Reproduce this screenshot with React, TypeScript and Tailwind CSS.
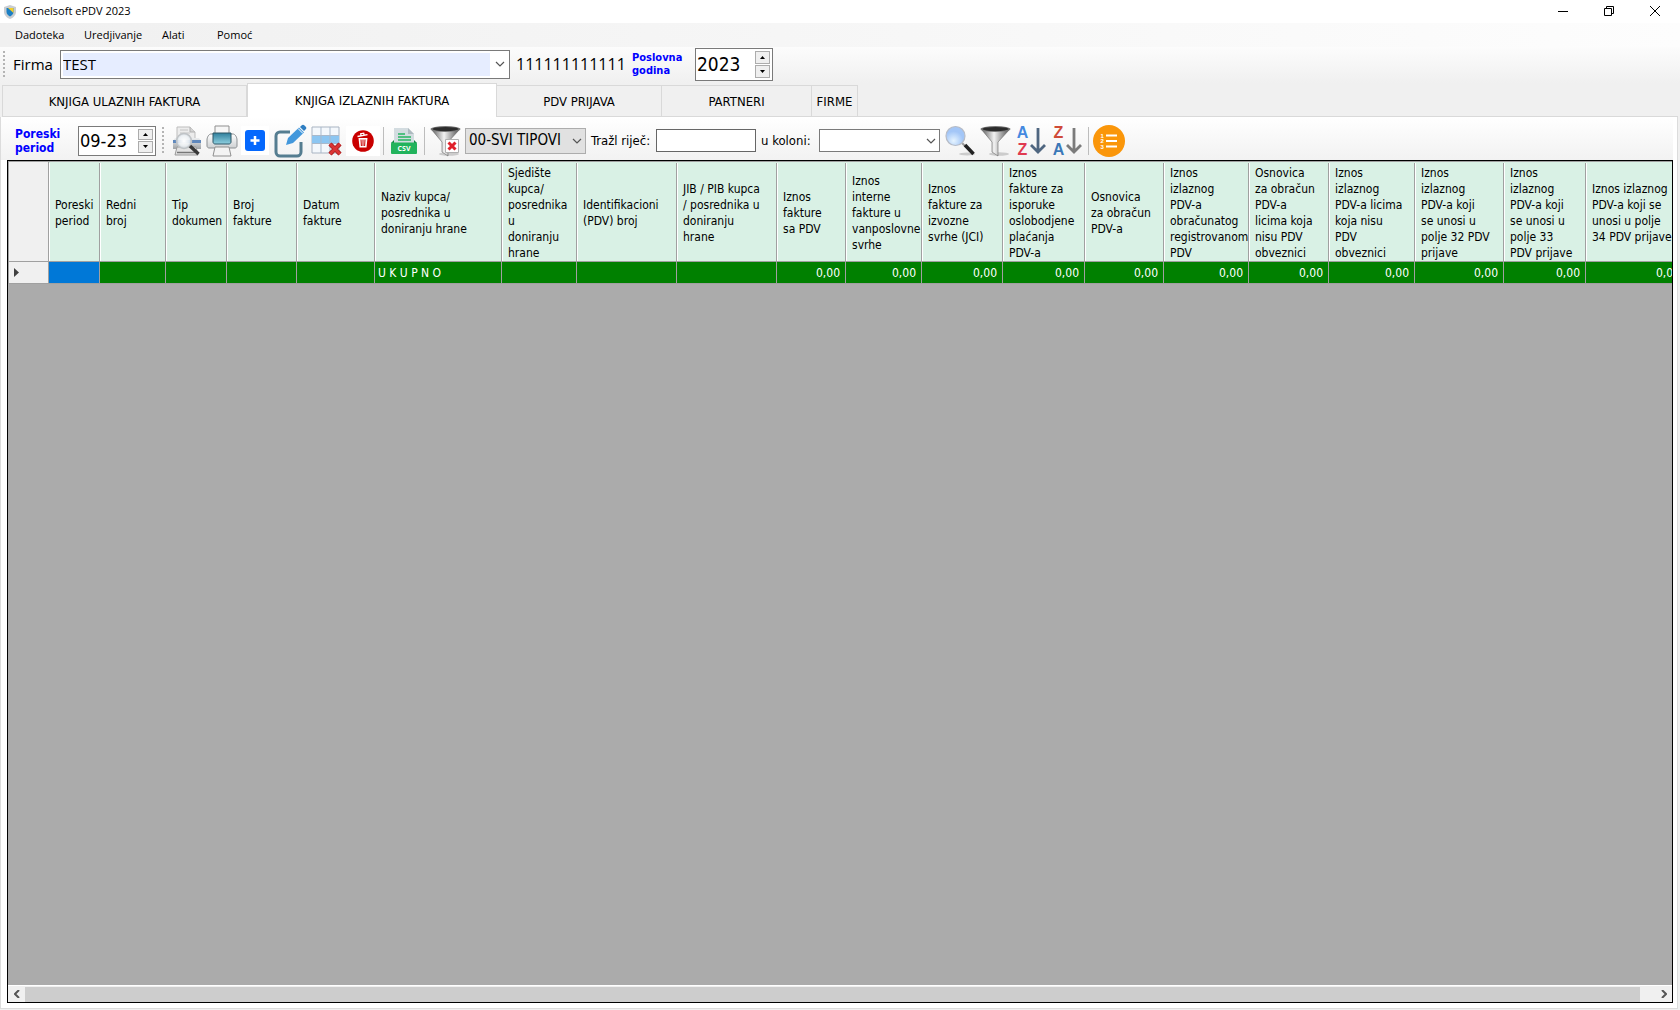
import { ReactNode } from "react";

interface Column {
  lines: string[];
  width: string;
  total: string;
  align: string;
}

const LEFT = "text-left";
const RIGHT = "text-right";

const columns: Column[] = [
  { lines: ["Poreski", "period"], width: "w-[51px]", total: "", align: LEFT },
  { lines: ["Redni", "broj"], width: "w-[66px]", total: "", align: LEFT },
  { lines: ["Tip", "dokumen"], width: "w-[61px]", total: "", align: LEFT },
  { lines: ["Broj", "fakture"], width: "w-[70px]", total: "", align: LEFT },
  { lines: ["Datum", "fakture"], width: "w-[78px]", total: "", align: LEFT },
  {
    lines: ["Naziv kupca/", "posrednika u", "doniranju hrane"],
    width: "w-[127px]",
    total: "U K U P N O",
    align: LEFT,
  },
  {
    lines: ["Sjedište", "kupca/", "posrednika", "u", "doniranju", "hrane"],
    width: "w-[75px]",
    total: "",
    align: LEFT,
  },
  { lines: ["Identifikacioni", "(PDV) broj"], width: "w-[100px]", total: "", align: LEFT },
  {
    lines: ["JIB / PIB kupca", "/ posrednika u", "doniranju", "hrane"],
    width: "w-[100px]",
    total: "",
    align: LEFT,
  },
  { lines: ["Iznos", "fakture", "sa PDV"], width: "w-[69px]", total: "0,00", align: RIGHT },
  {
    lines: ["Iznos", "interne", "fakture u", "vanposlovne", "svrhe"],
    width: "w-[76px]",
    total: "0,00",
    align: RIGHT,
  },
  {
    lines: ["Iznos", "fakture za", "izvozne", "svrhe (JCI)"],
    width: "w-[81px]",
    total: "0,00",
    align: RIGHT,
  },
  {
    lines: ["Iznos", "fakture za", "isporuke", "oslobodjene", "plaćanja", "PDV-a"],
    width: "w-[82px]",
    total: "0,00",
    align: RIGHT,
  },
  { lines: ["Osnovica", "za obračun", "PDV-a"], width: "w-[79px]", total: "0,00", align: RIGHT },
  {
    lines: ["Iznos", "izlaznog", "PDV-a", "obračunatog", "registrovanom", "PDV"],
    width: "w-[85px]",
    total: "0,00",
    align: RIGHT,
  },
  {
    lines: ["Osnovica", "za obračun", "PDV-a", "licima koja", "nisu PDV", "obveznici"],
    width: "w-[80px]",
    total: "0,00",
    align: RIGHT,
  },
  {
    lines: ["Iznos", "izlaznog", "PDV-a licima", "koja nisu", "PDV", "obveznici"],
    width: "w-[86px]",
    total: "0,00",
    align: RIGHT,
  },
  {
    lines: ["Iznos", "izlaznog", "PDV-a koji", "se unosi u", "polje 32 PDV", "prijave"],
    width: "w-[89px]",
    total: "0,00",
    align: RIGHT,
  },
  {
    lines: ["Iznos", "izlaznog", "PDV-a koji", "se unosi u", "polje 33", "PDV prijave"],
    width: "w-[82px]",
    total: "0,00",
    align: RIGHT,
  },
  {
    lines: ["Iznos izlaznog", "PDV-a koji se", "unosi u polje", "34 PDV prijave"],
    width: "w-[100px]",
    total: "0,00",
    align: RIGHT,
  },
];

const tabs = [
  { label: "KNJIGA ULAZNIH FAKTURA", width: "w-[245px]", active: false },
  { label: "KNJIGA IZLAZNIH FAKTURA", width: "w-[250px]", active: true },
  { label: "PDV PRIJAVA", width: "w-[165px]", active: false },
  { label: "PARTNERI", width: "w-[150px]", active: false },
  { label: "FIRME", width: "w-[46px]", active: false },
];

function Chevron() {
  return (
    <svg className="pointer-events-none absolute right-1 top-1/2 -mt-1 h-2 w-2.5" viewBox="0 0 10 8">
      <path d="M1 2l4 4 4-4" fill="none" stroke="#555" strokeWidth="1.2" />
    </svg>
  );
}

function Grip() {
  return (
    <svg className="h-[27px] w-[2px] shrink-0" viewBox="0 0 2 27">
      <path d="M1 0v27" stroke="#b4b4b4" strokeWidth="2" strokeDasharray="2 2" />
    </svg>
  );
}

function Separator() {
  return <div className="h-7 w-px shrink-0 bg-[#bdbdbd]" />;
}

interface SpinnerProps {
  id: string;
  value: string;
  box: string;
  text: string;
}

function Spinner({ id, value, box, text }: SpinnerProps) {
  return (
    <div className={`flex w-[78px] shrink-0 border border-[#7a7a7a] bg-white py-0.5 pl-px pr-0.5 ${box}`}>
      <input id={id} defaultValue={value} className={`min-w-0 flex-1 bg-transparent outline-none ${text}`} />
      <div className="flex w-[15px] flex-col gap-px">
        <button aria-label="Povećaj" className="flex flex-1 items-center justify-center border border-[#acacac] bg-[#efefef]">
          <svg className="h-[3px] w-[5px]" viewBox="0 0 5 3">
            <path d="M0 3l2.500-3L5 3z" />
          </svg>
        </button>
        <button aria-label="Smanji" className="flex flex-1 items-center justify-center border border-[#acacac] bg-[#efefef]">
          <svg className="h-[3px] w-[5px]" viewBox="0 0 5 3">
            <path d="M0 0l2.500 3L5 0z" />
          </svg>
        </button>
      </div>
    </div>
  );
}

function ToolButton({ label, className, children }: { label: string; className: string; children: ReactNode }) {
  return (
    <button aria-label={label} title={label} className={`shrink-0 ${className}`}>
      {children}
    </button>
  );
}

function PreviewIcon() {
  return (
    <svg viewBox="0 0 30 32" className="h-8 w-[30px]">
      <defs>
        <linearGradient id="pv" x1="0" y1="0" x2="0" y2="1">
          <stop offset="0" stopColor="#eceef0" />
          <stop offset="1" stopColor="#9fa3a6" />
        </linearGradient>
        <radialGradient id="lens">
          <stop offset="0" stopColor="#fff" />
          <stop offset="0.700" stopColor="#eef2f5" stopOpacity="0.9" />
          <stop offset="1" stopColor="#cfd8e0" stopOpacity="0.8" />
        </radialGradient>
      </defs>
      <path d="M5 2h13l5 5v8H5z" fill="#ececec" stroke="#bdbdbd" />
      <path d="M18 2v5h5" fill="#d4d4d4" stroke="#b0b0b0" />
      <path d="M8 5h8M8 8h10" stroke="#c4c4c4" />
      <path d="M3 13h24l2 3v8H1v-8z" fill="url(#pv)" />
      <path d="M1 15h28v3H1z" fill="#5f88bd" />
      <path d="M5 22h19l2 8H3z" fill="#e2e2e2" stroke="#999" />
      <path d="M5 27.500h18" stroke="#777" strokeWidth="1.500" />
      <circle cx="12" cy="16" r="7.500" fill="url(#lens)" stroke="#bfc3c6" strokeWidth="1.500" />
      <path d="M18 21l8.500 8" stroke="#383838" strokeWidth="3.500" />
    </svg>
  );
}

function PrinterIcon() {
  return (
    <svg viewBox="0 0 32 32" className="h-8 w-8">
      <defs>
        <linearGradient id="pr" x1="0" y1="0" x2="0" y2="1">
          <stop offset="0" stopColor="#fff" />
          <stop offset="1" stopColor="#cdd0d2" />
        </linearGradient>
        <linearGradient id="screen" x1="0" y1="0" x2="0" y2="1">
          <stop offset="0" stopColor="#2f7f9c" />
          <stop offset="1" stopColor="#8fd0e0" />
        </linearGradient>
      </defs>
      <path d="M9 1h14v10H9z" fill="#f6f6f6" stroke="#8f8f8f" />
      <path d="M5 9h22c2 0 4 3 4 6v6c0 1-1 2-2 2H3c-1 0-2-1-2-2v-6c0-3 2-6 4-6z" fill="url(#pr)" stroke="#8b8f92" />
      <path d="M7 8h18v9c0 1-1 2-2 2H9c-1 0-2-1-2-2z" fill="url(#screen)" stroke="#2d5666" />
      <path d="M9 22h14l2 9H7z" fill="#f3f3f3" stroke="#8f8f8f" />
    </svg>
  );
}

function EditIcon() {
  return (
    <svg viewBox="0 0 34 34" className="h-[34px] w-[34px]">
      <path d="M17 8H7a4 4 0 0 0-4 4v16a4 4 0 0 0 4 4h17a4 4 0 0 0 4-4V18" fill="none" stroke="#557d90" strokeWidth="3" />
      <path d="M13 21l2-7L26 3.500l5 5L20 19z" fill="#4398dc" />
      <path d="M27 3l1.500-1.500a2 2 0 0 1 3 0l1 1a2 2 0 0 1 0 3L31 7z" fill="#2f7ec2" />
      <path d="M25 4.500l5 5" stroke="#fff" strokeWidth="1" />
    </svg>
  );
}

function GridDeleteIcon() {
  return (
    <svg viewBox="0 0 31 31" className="h-[31px] w-[31px]">
      <path d="M1 2h27v26H1z" fill="#f4f8fc" stroke="#a9b4c2" />
      <path d="M1 10.500h27v8H1z" fill="#8cc6f2" />
      <path d="M1 10.500h27M1 18.500h27M10 2v26M19 2v26" stroke="#a9b9cb" />
      <path d="M19 19l10 10M29 19L19 29" stroke="#a41e1e" strokeWidth="4.500" />
      <path d="M19 19l10 10M29 19L19 29" stroke="#db3434" strokeWidth="2.800" />
    </svg>
  );
}

function TrashIcon() {
  return (
    <svg viewBox="0 0 22 22" className="h-[22px] w-[22px]">
      <circle cx="11" cy="11" r="10.800" fill="#c90000" />
      <path d="M6.500 8h9l-1 9.500h-7z" fill="#fff" />
      <path d="M5.500 6.500l10-1.800M9 5.200l-.3-1.500 3-.5.3 1.500" stroke="#fff" strokeWidth="1.300" fill="none" />
      <path d="M9 9.500l.4 6.500M11 9.500V16M13 9.500l-.4 6.500" stroke="#c90000" />
    </svg>
  );
}

function CsvIcon() {
  return (
    <svg viewBox="0 0 26 28" className="h-7 w-[26px]">
      <path d="M3 1h14l6 6v9H3z" fill="#d3dce0" />
      <path d="M17 1l6 6h-6z" fill="#aebac0" />
      <path d="M7 7h7M7 10h13M7 13h13" stroke="#27b561" strokeWidth="1.300" />
      <path d="M0 16l3-3v3zM26 16l-3-3v3z" fill="#118043" />
      <rect y="15.500" width="26" height="11.500" rx="1" fill="#22b35c" />
      <text x="13" y="24" textAnchor="middle" fontSize="7" fontWeight="700" fill="#fff" fontFamily="Open Sans, sans-serif">
        CSV
      </text>
    </svg>
  );
}

function FunnelIcon({ id, clear = false }: { id: string; clear?: boolean }) {
  return (
    <svg viewBox="0 0 31 32" className="h-8 w-[31px]">
      <defs>
        <linearGradient id={id}>
          <stop offset="0" stopColor="#555" />
          <stop offset="0.450" stopColor="#f2f2f2" />
          <stop offset="1" stopColor="#4a4a4a" />
        </linearGradient>
      </defs>
      <ellipse cx="19" cy="29" rx="10" ry="1.800" fill="#ccc" />
      <path d="M1 4l11 13v10l6 4V17L30 4z" fill={`url(#${id})`} stroke="#666" strokeWidth="0.600" />
      <ellipse cx="15.500" cy="4" rx="15" ry="3" fill="#777" />
      <ellipse cx="15.500" cy="4" rx="13" ry="2" fill="#2c2c2c" />
      {clear && (
        <>
          <path d="M15.500 14.500h13v13h-13z" fill="#fff" stroke="#b0b0b0" />
          <path d="M18.500 17.500l7 7M25.500 17.500l-7 7" stroke="#e0212b" strokeWidth="3" />
        </>
      )}
    </svg>
  );
}

function SearchIcon() {
  return (
    <svg viewBox="0 0 30 32" className="h-8 w-[30px]">
      <defs>
        <radialGradient id="glass" cx="0.400" cy="0.750">
          <stop offset="0" stopColor="#e6f4ff" />
          <stop offset="1" stopColor="#a3c6f7" />
        </radialGradient>
      </defs>
      <ellipse cx="22" cy="29" rx="8" ry="1.500" fill="#ccc" />
      <path d="M17 18l4 4" stroke="#999" strokeWidth="2" />
      <path d="M20 20l8.500 9" stroke="#222" strokeWidth="3.500" />
      <circle cx="10.500" cy="11" r="9.500" fill="url(#glass)" stroke="#b7bcc6" strokeWidth="1.200" />
    </svg>
  );
}

function SortIcon({ top, bottom, topColor, bottomColor, arrow }: Record<string, string>) {
  return (
    <svg
      viewBox="0 0 30 32"
      className="h-8 w-[30px] overflow-visible"
      fontFamily="Liberation Sans, sans-serif"
      fontWeight="700"
      fontSize="16"
    >
      <text x="6.500" y="13" textAnchor="middle" fill={topColor}>
        {top}
      </text>
      <text x="6.500" y="30" textAnchor="middle" fill={bottomColor}>
        {bottom}
      </text>
      <path d="M22 3v24M15 20l7 7 7-7" fill="none" stroke={arrow} strokeWidth="2.800" />
    </svg>
  );
}

function ListIcon() {
  return (
    <svg viewBox="0 0 32 32" className="h-8 w-8">
      <circle cx="16" cy="16" r="16" fill="#fa960a" />
      <path d="M13 10.500h11M13 16h11M13 21.500h11" stroke="#fff" strokeWidth="1.800" />
      <g fill="#fff" fontSize="6" fontWeight="700" fontFamily="Liberation Sans, sans-serif">
        <text x="7.500" y="12.500">1</text>
        <text x="7.500" y="18">2</text>
        <text x="7.500" y="23.500">3</text>
      </g>
    </svg>
  );
}

function TitleBar() {
  return (
    <header className="flex h-[23px] shrink-0 items-center bg-white pl-1 font-['Open_Sans',sans-serif] text-[11px]">
      <svg viewBox="0 0 12 14" className="mr-[7px] h-3.5 w-3">
        <path d="M6 0l6 2v5c0 3-3 6-6 7-3-1-6-4-6-7V2z" fill="#c9cdd1" />
        <path d="M2.500 3h7v4c0 2-2 4-3.500 4.500C4.500 11 2.500 9 2.500 7z" fill="#1b7fc4" />
        <path d="M4 3h5.500v5z" fill="#f4cf2a" />
      </svg>
      <h1 className="flex-1">Genelsoft ePDV 2023</h1>
      <div className="flex items-center gap-9 pb-0.5 pr-5">
        <button aria-label="Minimiziraj">
          <svg viewBox="0 0 10 10" className="h-2.5 w-2.5">
            <path d="M0 5.500h10" stroke="#000" />
          </svg>
        </button>
        <button aria-label="Vrati">
          <svg viewBox="0 0 10 10" className="h-2.5 w-2.5" fill="none" stroke="#000">
            <path d="M.5 2.500h7v7h-7zM2.500 2.500v-2h7v7h-2" />
          </svg>
        </button>
        <button aria-label="Zatvori">
          <svg viewBox="0 0 10 10" className="h-2.5 w-2.5">
            <path d="M0 0l10 10M10 0L0 10" stroke="#000" />
          </svg>
        </button>
      </div>
    </header>
  );
}

function CompanyBar() {
  return (
    <div className="flex h-9 shrink-0 items-center bg-gradient-to-b from-[#fcfcfc] to-[#f0f0f0] pb-0.5 pl-[3px]">
      <Grip />
      <label htmlFor="firma" className="ml-2 w-[47px] font-['Open_Sans',sans-serif] text-[15px]">
        Firma
      </label>
      <div className="relative h-[29px] w-[450px] border border-[#7a7a7a] bg-white p-0.5">
        <select
          id="firma"
          className="block h-full w-[427px] appearance-none bg-[#e6edff] font-['Open_Sans',sans-serif] text-[15px] leading-[22px] outline-none"
        >
          <option>TEST</option>
        </select>
        <Chevron />
      </div>
      <span className="ml-1.5 w-[116px] font-['Open_Sans',sans-serif] text-[16px]">111111111111</span>
      <label htmlFor="godina" className="w-[63px] text-[11px] font-bold leading-[13px] text-[#0000ff]">
        Poslovna
        <br />
        godina
      </label>
      <Spinner id="godina" value="2023" box="h-[33px]" text="text-[19px]" />
    </div>
  );
}

function RecordBar() {
  return (
    <div className="flex h-[43px] shrink-0 items-center bg-gradient-to-b from-white to-[#f2f2f2] pl-3.5 pt-1">
      <label htmlFor="period" className="w-[63px] text-[12px] font-bold leading-[14px] text-[#0000ff]">
        Poreski
        <br />
        period
      </label>
      <Spinner id="period" value="09-23" box="h-[30px]" text="text-[18px]" />
      <div className="ml-1.5 flex flex-1 items-center">
        <Grip />
        <ToolButton label="Pregled štampe" className="ml-2">
          <PreviewIcon />
        </ToolButton>
        <ToolButton label="Štampa" className="ml-1">
          <PrinterIcon />
        </ToolButton>
        <ToolButton label="Dodaj" className="ml-[3px] bg-white p-1">
          <svg viewBox="0 0 20 21" className="h-[21px] w-5">
            <rect width="20" height="21" rx="3" fill="#0568fd" />
            <path d="M10 6v9M5.500 10.500h9" stroke="#fff" strokeWidth="2.500" />
          </svg>
        </ToolButton>
        <ToolButton label="Izmijeni" className="ml-1">
          <EditIcon />
        </ToolButton>
        <ToolButton label="Obriši red" className="ml-1">
          <GridDeleteIcon />
        </ToolButton>
        <ToolButton label="Obriši sve" className="ml-1 bg-white px-1.5 py-1">
          <TrashIcon />
        </ToolButton>
        <div className="ml-[3px]">
          <Separator />
        </div>
        <ToolButton label="CSV izvoz" className="mx-[7px]">
          <CsvIcon />
        </ToolButton>
        <Separator />
        <ToolButton label="Ukloni filter" className="ml-[5px]">
          <FunnelIcon id="funnelClear" clear />
        </ToolButton>
        <div className="relative ml-1 h-[26px] w-[121px] shrink-0">
          <select
            aria-label="Tip dokumenta"
            className="h-full w-full appearance-none border border-[#adadad] bg-[#e1e1e1] pl-[3px] text-[15px] outline-none"
          >
            <option>00-SVI TIPOVI</option>
          </select>
          <Chevron />
        </div>
        <label htmlFor="rijec" className="ml-[5px] w-[65px] shrink-0 whitespace-nowrap text-[13px]">
          Tražl riječ:
        </label>
        <input id="rijec" className="h-[23px] w-[100px] shrink-0 border border-[#666] bg-white px-1 text-[13px] outline-none" />
        <label htmlFor="kolona" className="ml-[5px] w-[58px] shrink-0 whitespace-nowrap text-[13px]">
          u koloni:
        </label>
        <div className="relative h-[23px] w-[121px] shrink-0">
          <select id="kolona" className="h-full w-full appearance-none border border-[#7a7a7a] bg-white outline-none" />
          <Chevron />
        </div>
        <ToolButton label="Traži" className="ml-[5px]">
          <SearchIcon />
        </ToolButton>
        <ToolButton label="Filter" className="ml-[5px]">
          <FunnelIcon id="funnel" />
        </ToolButton>
        <ToolButton label="Sortiraj A-Z" className="ml-[5px]">
          <SortIcon top="A" bottom="Z" topColor="#4489e0" bottomColor="#e03a50" arrow="#4f6680" />
        </ToolButton>
        <ToolButton label="Sortiraj Z-A" className="ml-1.5">
          <SortIcon top="Z" bottom="A" topColor="#cf4a38" bottomColor="#3b78b8" arrow="#7b7b7b" />
        </ToolButton>
        <div className="ml-1.5 mr-1">
          <Separator />
        </div>
        <ToolButton label="Lista" className="">
          <ListIcon />
        </ToolButton>
      </div>
    </div>
  );
}

function InvoiceTable() {
  return (
    <table className="w-[1678px] table-fixed border-separate border-spacing-0 text-[12px] leading-4">
      <thead>
        <tr className="h-[101px]">
          <th className="w-[41px] border border-[#a0a0a0] bg-[#f0f0f0] p-0" />
          {columns.map((col, i) => (
            <th
              key={i}
              className={`border-b border-t border-[#a0a0a0] bg-[#d9f1e5] p-0 text-left font-normal ${col.width}`}
            >
              <div className="flex h-[98px] items-center overflow-hidden whitespace-nowrap border-l border-r border-l-white border-r-[#a0a0a0] pl-[5px] pt-0.5">
                <span className="block">
                  {col.lines.map((line, n) => (
                    <span key={n} className="block">
                      {line}
                    </span>
                  ))}
                </span>
              </div>
            </th>
          ))}
        </tr>
      </thead>
      <tbody>
        <tr className="h-[22px] text-white">
          <th className="border-b border-l border-r border-[#a0a0a0] bg-[#f0f0f0] p-0">
            <svg viewBox="0 0 5 9" className="ml-[5px] h-[9px] w-[5px]">
              <path d="M0 0l5 4.500L0 9z" fill="#404040" />
            </svg>
          </th>
          {columns.map((col, i) => (
            <td
              key={i}
              className={`border-b border-r border-[#a0a0a0] pb-0 pl-[3px] pr-[5px] pt-px ${col.align} ${
                i === 0 ? "bg-[#0078d7]" : "bg-[#008000]"
              }`}
            >
              {col.total}
            </td>
          ))}
        </tr>
      </tbody>
    </table>
  );
}

function HorizontalScrollBar() {
  return (
    <div className="flex h-[17px] shrink-0 items-center border-t border-white bg-[#f0f0f0]">
      <button aria-label="Pomjeri lijevo" className="flex w-[17px] justify-center">
        <svg viewBox="0 0 6 8" className="h-2 w-1.5">
          <path d="M5 0L1 4l4 4" fill="none" stroke="#555" strokeWidth="2" />
        </svg>
      </button>
      <div className="mr-[15px] h-[15px] flex-1 bg-[#cdcdcd]" />
      <button aria-label="Pomjeri desno" className="flex w-[17px] justify-center">
        <svg viewBox="0 0 6 8" className="h-2 w-1.5">
          <path d="M1 0l4 4-4 4" fill="none" stroke="#555" strokeWidth="2" />
        </svg>
      </button>
    </div>
  );
}

export default function App() {
  return (
    <div className="flex h-screen flex-col overflow-hidden bg-[#f0f0f0] font-['DejaVu_Sans_Condensed','DejaVu_Sans',sans-serif] text-black">
      <TitleBar />
      <nav className="flex h-6 shrink-0 items-center bg-gradient-to-r from-[#f0f0f0] to-[#fdfdfd] pl-[15px] font-['Open_Sans',sans-serif] text-[11px]">
        <button className="w-[69px] text-left">Dadoteka</button>
        <button className="w-[78px] text-left">Uredjivanje</button>
        <button className="w-[55px] text-left">Alati</button>
        <button className="text-left">Pomoć</button>
      </nav>
      <CompanyBar />
      <div role="tablist" className="flex h-[34px] shrink-0 items-end pl-0.5 text-[13px]">
        {tabs.map((tab) => (
          <button
            key={tab.label}
            role="tab"
            aria-selected={tab.active}
            className={`whitespace-nowrap border-[#d9d9d9] border-t ${tab.width} ${
              tab.active
                ? "h-[34px] border-l border-r bg-white"
                : "h-8 border-b border-r bg-[#f0f0f0] pt-0.5 first:border-l"
            }`}
          >
            {tab.label}
          </button>
        ))}
        <div className="mr-0.5 flex-1 border-b border-[#d9d9d9]" />
      </div>
      <main className="mb-px mr-0.5 flex min-h-0 flex-1 flex-col border border-t-0 border-[#dcdcdc] bg-white pb-[5px] pr-1">
        <RecordBar />
        <section className="ml-1.5 flex min-h-0 flex-1 flex-col overflow-hidden border border-black bg-[#ababab]">
          <div className="min-h-0 flex-1 overflow-hidden">
            <InvoiceTable />
          </div>
          <HorizontalScrollBar />
        </section>
      </main>
    </div>
  );
}
